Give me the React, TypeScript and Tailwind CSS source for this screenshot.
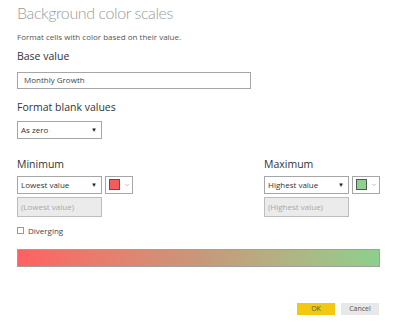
import { ChevronDown } from "lucide-react";

function Select({ label }: { label: string }) {
  return (
    <div className="flex h-[18px] w-[85px] items-center justify-between border border-[#a6a6a6] bg-white pl-[3px] pr-[4px] text-[8px] text-[#333]">
      <span>{label}</span>
      <span className="text-[6px] leading-none text-[#222]">▼</span>
    </div>
  );
}

function ColorPick({ color }: { color: string }) {
  return (
    <div className="flex h-[18px] w-[28px] items-center gap-[4px] border border-[#a6a6a6] bg-white pl-[3px]">
      <div className="h-[11px] w-[11px] border border-[#555]" style={{ backgroundColor: color }} />
      <ChevronDown className="h-[6px] w-[6px] text-[#aaa]" strokeWidth={3} />
    </div>
  );
}

function Bound({ title, pick, color, hint }: { title: string; pick: string; color: string; hint: string }) {
  return (
    <div className="flex flex-col">
      <div className="text-[10.5px] leading-none text-[#333]">{title}</div>
      <div className="mt-[6px] flex gap-[3px]">
        <Select label={pick} />
        <ColorPick color={color} />
      </div>
      <div className="mt-[3px] flex h-[20px] w-[85px] items-center border border-[#bdbdbd] bg-[#ebebeb] pl-[3px] text-[8px] text-[#a8a8a8]">
        {hint}
      </div>
    </div>
  );
}

export default function App() {
  return (
    <div
      className="h-[323px] w-[400px] bg-white px-[17px] pt-[2px]"
      style={{ fontFamily: '"Open Sans", "Noto Sans", sans-serif' }}
    >
      <h1
        className="text-[16px] font-light leading-[22px] tracking-[-0.4px] text-[#9a9a9a]"
        style={{ fontFamily: 'Lato, "Open Sans", sans-serif' }}
      >
        Background color scales
      </h1>
      <p className="mt-[9px] text-[8px] leading-none text-[#555]">
        Format cells with color based on their value.
      </p>
      <div className="mt-[10px] text-[10.5px] leading-none text-[#333]">Base value</div>
      <div className="mt-[10px] flex h-[17px] w-[234px] items-center border border-[#a6a6a6] pl-[6px] text-[8px] text-[#444]">
        Monthly Growth
      </div>
      <div className="mt-[13px] text-[10.5px] leading-none text-[#333]">Format blank values</div>
      <div className="mt-[9px]">
        <Select label="As zero" />
      </div>
      <div className="mt-[20px] flex">
        <div className="w-[247px]">
          <Bound title="Minimum" pick="Lowest value" color="#f25c5c" hint="(Lowest value)" />
        </div>
        <Bound title="Maximum" pick="Highest value" color="#8fd08f" hint="(Highest value)" />
      </div>
      <label className="mt-[8px] flex items-center gap-[4px] text-[8px] text-[#444]">
        <span className="h-[7px] w-[7px] border border-[#999] bg-white" />
        Diverging
      </label>
      <div className="mt-[12px] h-[18px] w-[363px] border border-[#a0a0a0] bg-gradient-to-r from-[#ff6060] via-[#c8977a] to-[#8ccf8c]" />
      <div className="mt-[36px] flex justify-end gap-[6px] pr-[4px]">
        <button className="h-[12px] w-[38px] bg-[#f2c811] text-[7px] leading-none text-[#555]">OK</button>
        <button className="h-[12px] w-[38px] bg-[#e8e8e8] text-[7px] leading-none text-[#555]">Cancel</button>
      </div>
    </div>
  );
}
